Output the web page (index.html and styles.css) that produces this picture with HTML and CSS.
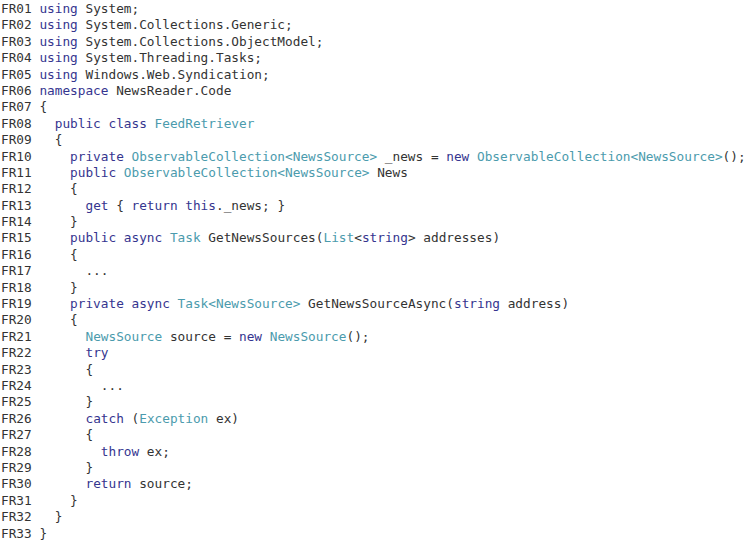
FILE: index.html
```html
<!DOCTYPE html>
<html>
<head>
<meta charset="utf-8">
<link rel="stylesheet" href="styles.css">
</head>
<body>
<div class="code">
<div class="ln">FR01 <span class="k">using</span> System;</div>
<div class="ln">FR02 <span class="k">using</span> System.Collections.Generic;</div>
<div class="ln">FR03 <span class="k">using</span> System.Collections.ObjectModel;</div>
<div class="ln">FR04 <span class="k">using</span> System.Threading.Tasks;</div>
<div class="ln">FR05 <span class="k">using</span> Windows.Web.Syndication;</div>
<div class="ln">FR06 <span class="k">namespace</span> NewsReader.Code</div>
<div class="ln">FR07 {</div>
<div class="ln">FR08   <span class="k">public</span> <span class="k">class</span> <span class="t">FeedRetriever</span></div>
<div class="ln">FR09   {</div>
<div class="ln">FR10     <span class="k">private</span> <span class="t">ObservableCollection&lt;NewsSource&gt;</span> _news = <span class="k">new</span> <span class="t">ObservableCollection&lt;NewsSource&gt;</span>();</div>
<div class="ln">FR11     <span class="k">public</span> <span class="t">ObservableCollection&lt;NewsSource&gt;</span> News</div>
<div class="ln">FR12     {</div>
<div class="ln">FR13       <span class="k">get</span> { <span class="k">return</span> <span class="k">this</span>._news; }</div>
<div class="ln">FR14     }</div>
<div class="ln">FR15     <span class="k">public</span> <span class="k">async</span> <span class="t">Task</span> GetNewsSources(<span class="t">List</span>&lt;<span class="k">string</span>&gt; addresses)</div>
<div class="ln">FR16     {</div>
<div class="ln">FR17       ...</div>
<div class="ln">FR18     }</div>
<div class="ln">FR19     <span class="k">private</span> <span class="k">async</span> <span class="t">Task&lt;NewsSource&gt;</span> GetNewsSourceAsync(<span class="k">string</span> address)</div>
<div class="ln">FR20     {</div>
<div class="ln">FR21       <span class="t">NewsSource</span> source = <span class="k">new</span> <span class="t">NewsSource</span>();</div>
<div class="ln">FR22       <span class="k">try</span></div>
<div class="ln">FR23       {</div>
<div class="ln">FR24         ...</div>
<div class="ln">FR25       }</div>
<div class="ln">FR26       <span class="k">catch</span> (<span class="t">Exception</span> ex)</div>
<div class="ln">FR27       {</div>
<div class="ln">FR28         <span class="k">throw</span> ex;</div>
<div class="ln">FR29       }</div>
<div class="ln">FR30       <span class="k">return</span> source;</div>
<div class="ln">FR31     }</div>
<div class="ln">FR32   }</div>
<div class="ln">FR33 }</div>
</div>
</body>
</html>
```

FILE: styles.css
```css
html, body {
  margin: 0;
  padding: 0;
  background: #ffffff;
}
.code {
  padding: 1px 0 0 1px;
  font-family: "DejaVu Sans Mono", "Liberation Mono", monospace;
  font-size: 12.76px;
  line-height: 16.4px;
  color: #333333;
}
.ln {
  white-space: pre;
  height: 16.4px;
}
.k {
  color: #35358f;
}
.t {
  color: #4b9bad;
}
```
